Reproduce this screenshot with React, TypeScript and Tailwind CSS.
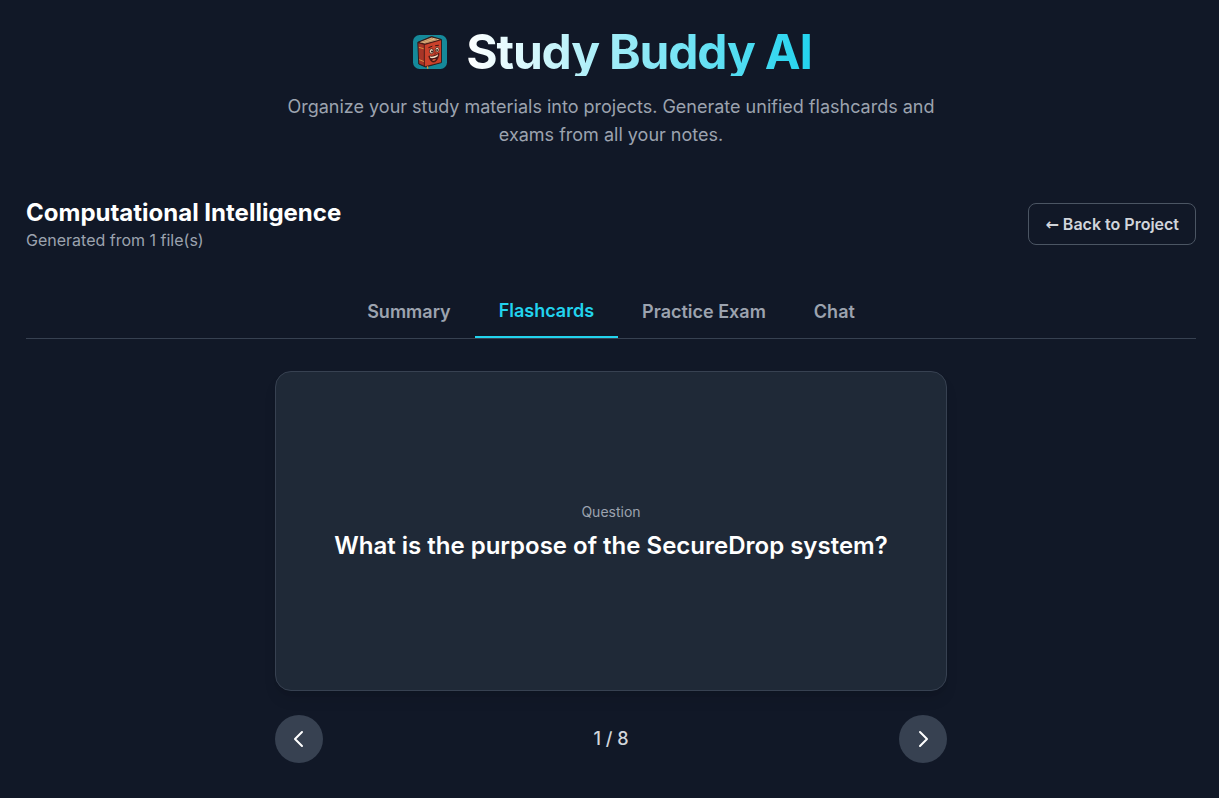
import { useState } from "react";

const tabs = ["Summary", "Flashcards", "Practice Exam", "Chat"];

function BookLogo() {
  return (
    <svg viewBox="-2 -2 40 40" className="h-10 w-10 shrink-0" aria-hidden="true">
      <rect x="1" y="1" width="34" height="34" rx="6.5" fill="#15899a" />
      <path d="M5.800 8.200 19.500 2.500 29.400 5.400v23.200L13.500 33 6.700 30Z" fill="#4a1c18" stroke="#2c1716" strokeWidth="0.900" strokeLinejoin="round" />
      <path d="M7.600 8.200 19.600 3.400l8.200 2.200L13 9.600Z" fill="#e0b680" />
      <path d="m10 8.300 11-3.900M12.500 9 25 5.400" stroke="#9c6440" strokeWidth="0.500" />
      <path d="m6.400 9.200 5.500 1.600v20.700l-4.700-2Z" fill="#a83527" />
      <path d="M12.700 10.900 29 6.300v21.900L13 32.200Z" fill="#cb412b" />
      <path d="m6.900 13.300 4.900 1.500M7.200 25.600l4.800 2" stroke="#d9913f" strokeWidth="1" />
      <path d="M12.400 11v20.700" stroke="#64241c" strokeWidth="0.800" />
      <path d="m15.500 32.200.2 2.600" stroke="#d89a3a" strokeWidth="1.300" />
      <path d="m16.800 13.600 3.200-1.300M23.500 11.700l3-.4" stroke="#3b1712" strokeWidth="1" strokeLinecap="round" />
      <ellipse cx="19.500" cy="17.200" rx="2.100" ry="2.500" fill="#f0dabb" stroke="#3b1712" strokeWidth="0.700" />
      <ellipse cx="25.200" cy="15.700" rx="1.900" ry="2.400" fill="#f0dabb" stroke="#3b1712" strokeWidth="0.700" />
      <circle cx="20" cy="17.500" r="1" fill="#241516" />
      <circle cx="25.100" cy="16" r="0.900" fill="#241516" />
      <path d="m22.700 17.500.7 2.300-1.500.5" fill="none" stroke="#651f18" strokeWidth="0.700" />
      <path d="M16.800 22c3.500.7 7.400-.5 10.200-3-.1 4.600-2.300 8.900-5.400 9.100-2.400.1-4.200-2.800-4.800-6.100Z" fill="#4a1715" stroke="#3b1712" strokeWidth="0.600" />
      <path d="M17.900 22.600c3 .4 6.100-.6 8.200-2.300l-.5 2c-2.100 1.600-4.700 2.200-7.200 1.800Z" fill="#f5e2c6" />
      <path d="M20 26.200c1-1.200 2.900-1.400 4-.700-.7 1.200-2.800 2.300-4 .7Z" fill="#d5603f" />
    </svg>
  );
}

function Chevron({ d }: { d: string }) {
  return (
    <svg viewBox="0 0 24 24" className="h-6 w-6" fill="none" stroke="currentColor" strokeWidth="2" strokeLinecap="round" strokeLinejoin="round" aria-hidden="true">
      <path d={d} />
    </svg>
  );
}

export default function App() {
  const [active, setActive] = useState("Flashcards");
  const [card, setCard] = useState(1);
  return (
    <div className="min-h-screen bg-[#111827] pt-7 pr-[23px] pb-8 pl-[26px] font-['Inter',sans-serif] text-white">
      <header className="mb-[47px] text-center">
        <div className="flex h-12 items-center justify-center gap-4">
          <BookLogo />
          <h1 className="bg-linear-to-r/srgb from-white to-[#22d3ee] bg-clip-text text-5xl leading-none font-bold tracking-tight text-transparent">
            Study Buddy AI
          </h1>
        </div>
        <p className="mx-auto mt-[17px] max-w-2xl text-lg text-[#9ca3af]">
          Organize your study materials into projects. Generate unified flashcards and exams from all your notes.
        </p>
      </header>
      <main>
        <div className="mb-8 flex items-center justify-between">
          <div>
            <h2 className="text-2xl leading-[33px] font-bold">Computational Intelligence</h2>
            <p className="leading-[23px] text-[#9ca3af]">Generated from 1 file(s)</p>
          </div>
          <button className="rounded-lg border border-[#4b5563] px-4 py-2 font-semibold text-[#d1d5db]">
            <span className="font-['DejaVu_Sans',sans-serif] leading-none">←</span> Back to Project
          </button>
        </div>
        <nav className="mb-8 flex justify-center border-b border-[#374151]">
          {tabs.map((t) => (
            <button
              key={t}
              onClick={() => setActive(t)}
              className={
                t === active
                  ? "border-b-2 border-[#22d3ee] px-6 pt-[13px] pb-[11px] text-lg font-semibold text-[#22d3ee]"
                  : "px-6 pt-[13px] pb-[11px] text-lg font-semibold text-[#9ca3af]"
              }
            >
              {t}
            </button>
          ))}
        </nav>
        <section className="mx-auto max-w-2xl">
          <div className="flex h-80 flex-col items-center justify-center rounded-2xl border border-[#374151] bg-[#1f2937] px-6 pt-[26px] pb-6 text-center shadow-lg">
            <p className="mb-2 text-sm text-[#9ca3af]">Question</p>
            <p className="text-2xl font-semibold">What is the purpose of the SecureDrop system?</p>
          </div>
          <div className="mt-6 flex items-center justify-between">
            <button aria-label="Previous card" onClick={() => setCard(Math.max(1, card - 1))} className="rounded-full bg-[#374151] p-3">
              <Chevron d="M15 19l-7-7 7-7" />
            </button>
            <p className="text-lg font-medium text-[#d1d5db]">{`${card} / 8`}</p>
            <button aria-label="Next card" onClick={() => setCard(Math.min(8, card + 1))} className="rounded-full bg-[#374151] p-3">
              <Chevron d="M9 5l7 7-7 7" />
            </button>
          </div>
        </section>
      </main>
    </div>
  );
}
